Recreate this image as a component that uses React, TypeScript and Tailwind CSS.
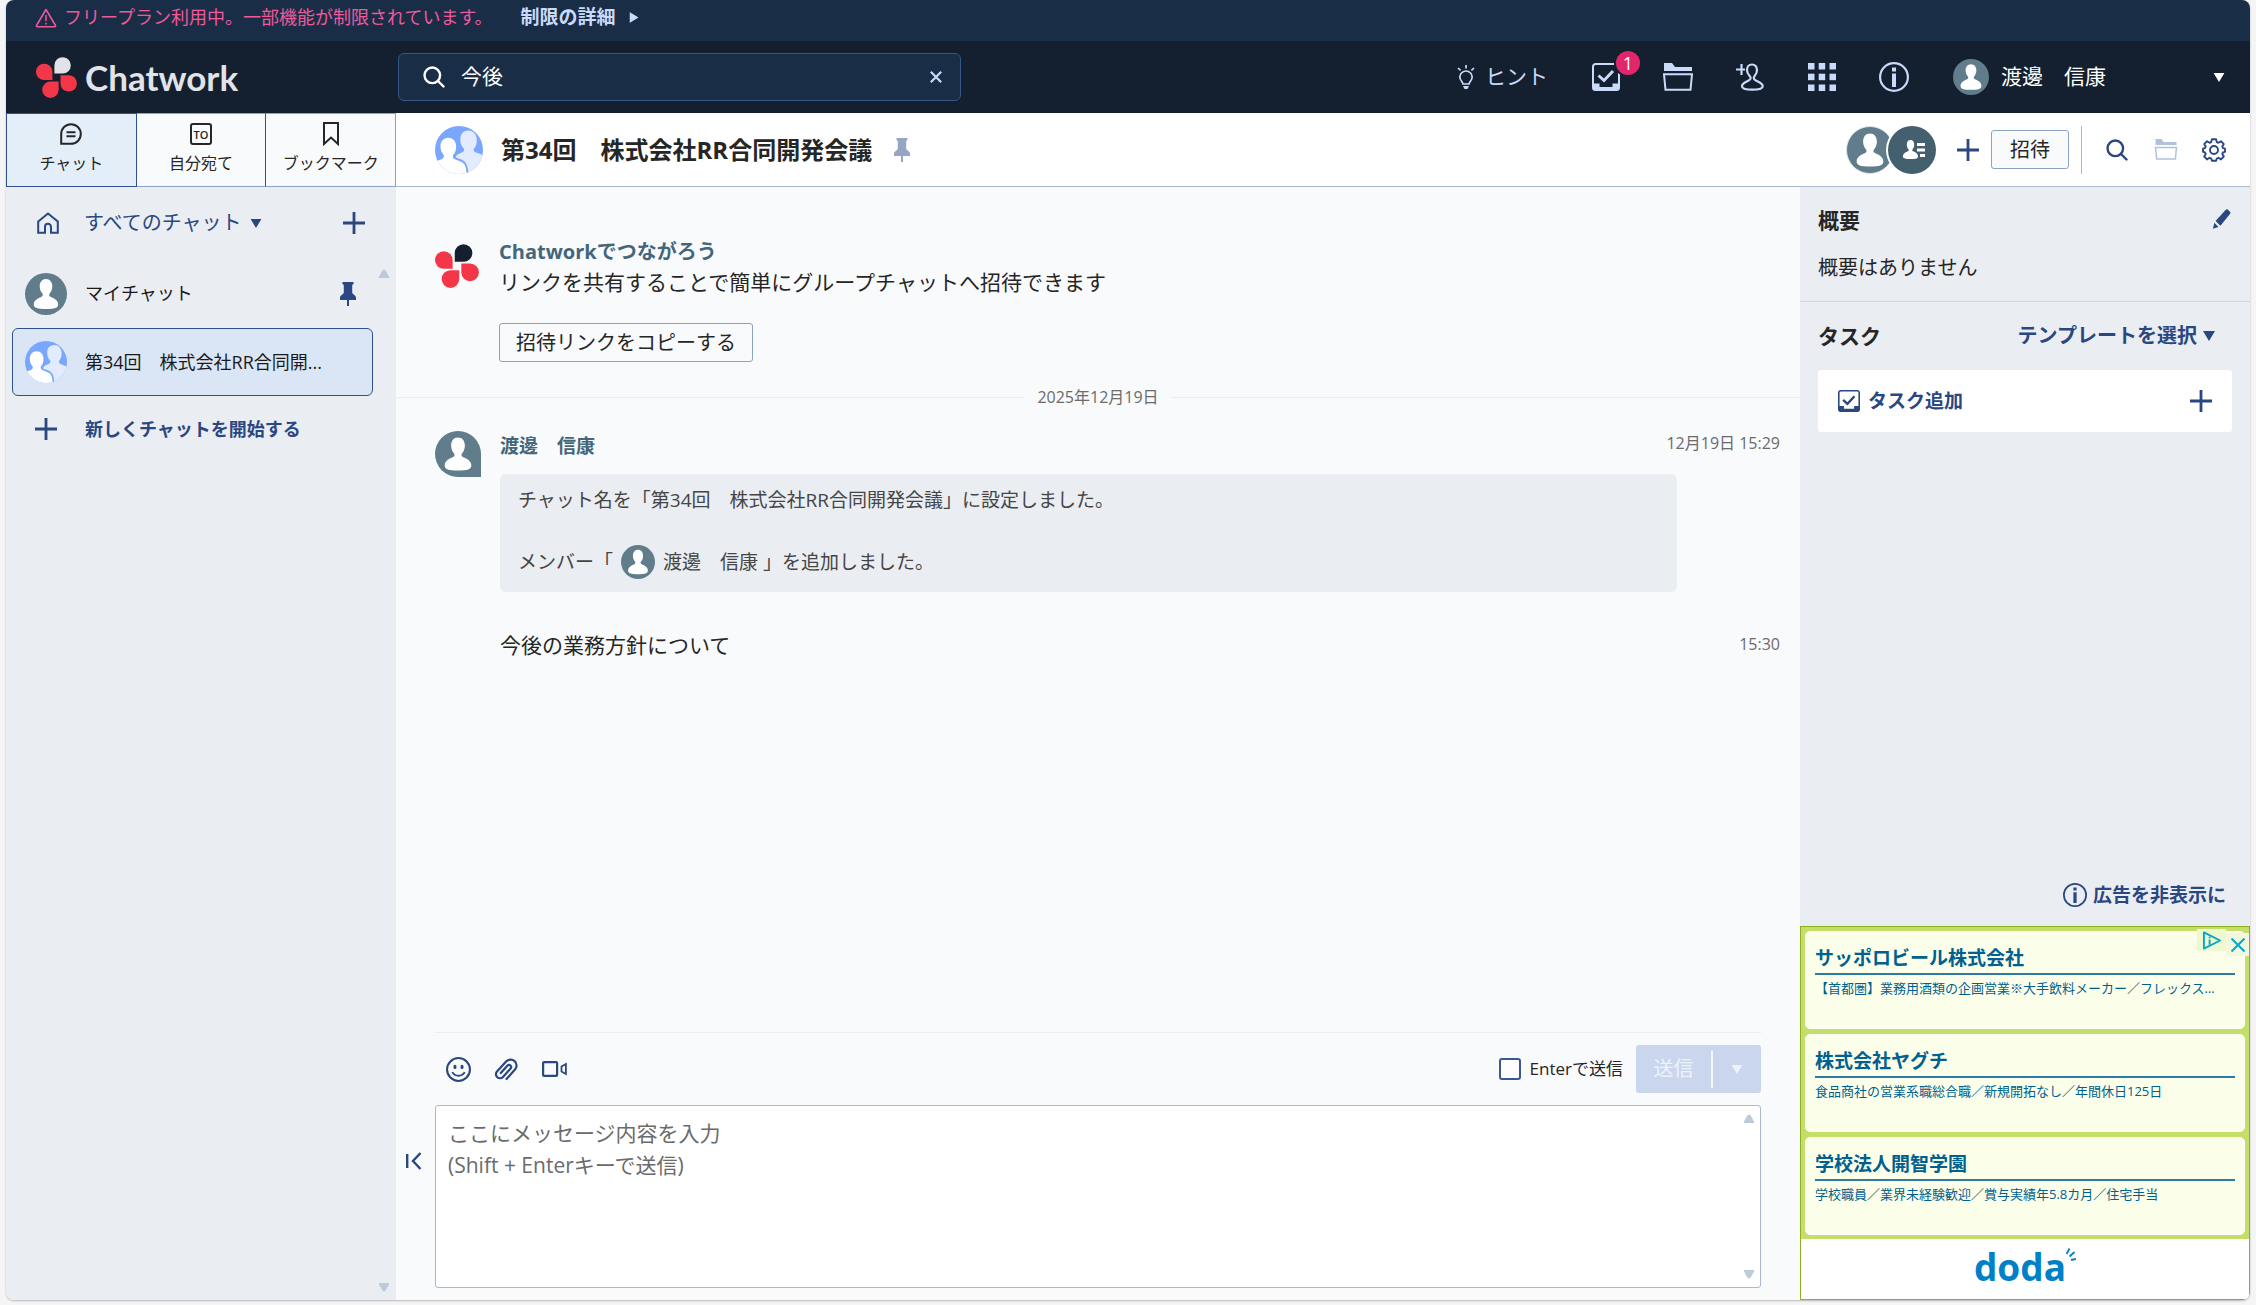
import React, { useState } from "react";
import clsx from "clsx";

interface IconProps {
  className?: string;
}

interface AdItem {
  id: number;
  company: string;
  text: string;
}

const ads: AdItem[] = [
  {
    id: 1,
    company: "サッポロビール株式会社",
    text: "【首都圏】業務用酒類の企画営業※大手飲料メーカー／フレックス…",
  },
  {
    id: 2,
    company: "株式会社ヤグチ",
    text: "食品商社の営業系職総合職／新規開拓なし／年間休日125日",
  },
  {
    id: 3,
    company: "学校法人開智学園",
    text: "学校職員／業界未経験歓迎／賞与実績年5.8カ月／住宅手当",
  },
];

// ---------- icons ----------

const LogoMark = ({ className, petal }: { className?: string; petal: string }) => (
  <svg viewBox="0 0 41 41" className={className} aria-hidden="true">
    <path d="M18.4 16.6V8.4a8.2 8.2 0 1 1 8.2 8.2z" fill={petal} />
    <path d="M16.4 23.1H8.2a8.2 8.2 0 1 1 8.2-8.2z" fill="#f33748" />
    <path d="M24.5 18.2h8.2a8.2 8.2 0 1 1-8.2 8.2z" fill="#f33748" />
    <path d="M22.6 24.5v8.2a8.2 8.2 0 1 1-8.2-8.2z" fill="#f33748" />
  </svg>
);

const UserAvatar = ({ className }: IconProps) => (
  <svg viewBox="0 0 42 42" className={clsx("shrink-0 bg-[#617c8a]", className)} aria-hidden="true">
    <path
      d="M21 6c-4 0-6.300 3.200-6.300 7.500 0 3 1.300 5.600 2.900 7.300.5 1.600.1 2.300-1.100 2.900-4 1.700-7.700 3.800-7.700 7.700 0 3.400 3.500 4.600 12.200 4.600s12.200-1.200 12.200-4.600c0-3.900-3.700-6-7.700-7.700-1.200-.6-1.600-1.300-1.100-2.900 1.600-1.700 2.900-4.300 2.900-7.300C27.300 9.200 25 6 21 6z"
      fill="#fff"
    />
  </svg>
);

const GroupAvatar = ({ className }: IconProps) => (
  <svg viewBox="0 0 42 42" className={clsx("shrink-0 rounded-full bg-[#79a7fd]", className)} aria-hidden="true">
    <path
      d="M29 4c-4.400 0-7 3.600-6.800 8.200.1 3.400 1.200 5.600 3.200 7.600.3 2-.6 3-3 3.800-2.600.9-4.400 2.400-4.400 4.400l5 2.200c3.600 1.400 5.600 4.400 6 11.800h13V25.600c-2-1-3.600-1.500-5-1.900-2.600-.8-3.400-1.700-3-3.700 1.700-1.900 2.600-4.400 2.600-7.600C36.500 7.400 33.600 4 29 4z"
      fill="#e2ebff"
    />
    <path d="M36 18.500l2 3.200-2 .2z" fill="#79a7fd" />
    <path
      d="M11.600 10.200c-4.300 0-6.800 3.300-6.800 7.800 0 3.300 1.200 5.700 2.900 7.400.4 2-.2 3-2 3.700L0 31.300V42h27.600c.1-5.700-1.200-9.200-5.400-10.900l-4.500-1.900c-1.800-.8-2.300-1.700-1.900-3.700 1.700-1.700 2.700-4.200 2.700-7.500 0-4.500-2.600-7.800-6.900-7.800z"
      fill="#fff"
    />
    <path d="M17.600 28l5.800 2.100c3.500 1.300 5 4.500 5.200 11.900" fill="none" stroke="#79a7fd" strokeWidth="1.200" />
  </svg>
);

const WarningIcon = ({ className }: IconProps) => (
  <svg viewBox="0 0 22 20" className={className} fill="none" stroke="currentColor" strokeWidth="1.500" aria-hidden="true">
    <path d="M11 1.500 20.500 17.500a.8.8 0 0 1-.7 1.200H2.200a.8.8 0 0 1-.7-1.200z" strokeLinejoin="round" />
    <path d="M11 7v6M11 14.800v1.700" />
  </svg>
);

const SearchIcon = ({ className }: IconProps) => (
  <svg viewBox="0 0 22 22" className={className} fill="none" stroke="currentColor" strokeWidth="2.400" aria-hidden="true">
    <circle cx="9.300" cy="9.300" r="7.800" />
    <path d="M15 15l5.500 5.500" strokeLinecap="round" />
  </svg>
);

const PlusIcon = ({ className }: IconProps) => (
  <svg viewBox="0 0 22 22" className={className} fill="none" stroke="currentColor" strokeWidth="2.800" aria-hidden="true">
    <path d="M11 0v22M0 11h22" />
  </svg>
);

const PinIcon = ({ className }: IconProps) => (
  <svg viewBox="0 0 16 24" className={className} fill="currentColor" aria-hidden="true">
    <path d="M2.500 0h11v2l-1.300 1v7.500c0 1.500 3.800 3 3.800 5V18H9v6H7v-6H0v-2.500c0-2 3.800-3.500 3.800-5V3L2.500 2z" />
  </svg>
);

const FolderIcon = ({ className }: IconProps) => (
  <svg viewBox="0 0 30 28" className={className} aria-hidden="true">
    <path d="M1 0h8l3 4h17v4H1z" fill="currentColor" />
    <path d="M1 11.300h28l-1.500 15.400h-25z" fill="none" stroke="currentColor" strokeWidth="2" />
  </svg>
);

const TaskIcon = ({ className }: IconProps) => (
  <svg viewBox="0 0 28 28" className={className} aria-hidden="true">
    <path
      d="M3.500 1h21A2.500 2.500 0 0 1 27 3.500v21a2.500 2.500 0 0 1-2.500 2.500h-21A2.500 2.500 0 0 1 1 24.500v-21A2.500 2.500 0 0 1 3.500 1z"
      fill="none"
      stroke="currentColor"
      strokeWidth="2"
    />
    <path d="M1 20.500h6.500V24h13v-3.500H27V26l-1 1H2l-1-1z" fill="currentColor" />
    <path d="M6.500 12.500l5.500 5 9-9.500" fill="none" stroke="currentColor" strokeWidth="3" />
  </svg>
);

const BulbIcon = ({ className }: IconProps) => (
  <svg viewBox="0 0 18 24" className={className} fill="none" stroke="currentColor" strokeWidth="1.700" aria-hidden="true">
    <path d="M9 0v3.500M1 3l2.600 2.400M17 3l-2.600 2.400" />
    <path d="M6 19c0-2-3.200-3.400-3.200-7A6.200 6.200 0 0 1 9 6a6.200 6.200 0 0 1 6.200 6c0 3.600-3.200 5-3.200 7z" />
    <path d="M6 21h6l-1.500 3h-3z" fill="currentColor" stroke="none" />
  </svg>
);

const AddContactIcon = ({ className }: IconProps) => (
  <svg viewBox="0 0 28 28" className={className} fill="none" stroke="currentColor" strokeWidth="2.200" aria-hidden="true">
    <path d="M5.500 1v11M0 6.500h9" />
    <path d="M16 1.500c-3 0-5 2.200-5 5.500 0 5.500 4 5.500 3.600 8.400C14 18.600 6 18.800 6 23.200c0 2.600 3 3.500 10.300 3.500S26.700 25.800 26.700 23.200c0-4.400-8.300-4.600-8.900-7.800C17.300 12.500 21 12.500 21 7c0-3.300-2-5.500-5-5.500z" />
  </svg>
);

const GridIcon = ({ className }: IconProps) => (
  <svg viewBox="0 0 28 28" className={className} fill="currentColor" aria-hidden="true">
    {[0, 10.700, 21.500].map((y) =>
      [0, 10.700, 21.500].map((x) => <rect key={`${x}-${y}`} x={x} y={y} width="6.500" height="6.500" />)
    )}
  </svg>
);

const InfoIcon = ({ className }: IconProps) => (
  <svg viewBox="0 0 30 30" className={className} aria-hidden="true">
    <circle cx="15" cy="15" r="13.900" fill="none" stroke="currentColor" strokeWidth="2.200" />
    <path d="M13 5.500h4v4h-4zM13 11.500h4V25h-4z" fill="currentColor" />
  </svg>
);

const Caret = ({ className }: IconProps) => (
  <svg viewBox="0 0 12 10" className={className} fill="currentColor" aria-hidden="true">
    <path d="M0 0h12L6 10z" />
  </svg>
);

const ScrollArrow = ({ className }: IconProps) => (
  <svg viewBox="0 0 12 10" className={clsx("h-[10px] w-3 text-[#bdcadb]", className)} aria-hidden="true">
    <path d="M5 1.200 1 8.500h10L7 1.200z" fill="currentColor" stroke="currentColor" strokeLinejoin="round" />
  </svg>
);

const ChatIcon = ({ className }: IconProps) => (
  <svg viewBox="0 0 22 22" className={className} fill="none" stroke="currentColor" strokeWidth="2" aria-hidden="true">
    <path d="M1.200 20.800V11A9.800 9.800 0 1 1 11 20.800z" />
    <path d="M6.500 9.200h9M6.500 13.200h9" />
  </svg>
);

const BookmarkIcon = ({ className }: IconProps) => (
  <svg viewBox="0 0 16 24" className={className} fill="none" stroke="currentColor" strokeWidth="2" aria-hidden="true">
    <path d="M1 1h14v21l-7-6.500L1 22z" />
  </svg>
);

const HomeIcon = ({ className }: IconProps) => (
  <svg viewBox="0 0 22 22" className={className} fill="none" stroke="currentColor" strokeWidth="2" aria-hidden="true">
    <path d="M1.200 9.500 11 1.500l9.800 8v11.300H14v-6a3 3 0 0 0-6 0v6H1.200z" />
  </svg>
);

const GearIcon = ({ className }: IconProps) => (
  <svg viewBox="0 0 24 24" className={className} fill="none" stroke="currentColor" strokeWidth="1.900" aria-hidden="true">
    <circle cx="12" cy="12" r="4" />
    <path
      d="M9.900 1.200h4.200l.7 2.900 1.600.7 2.600-1.600 2.800 2.900-1.500 2.500.7 1.600 2 .5v3.100l-2 .6-.7 1.600 1.500 2.500-2.800 2.900-2.600-1.600-1.600.7-.7 2.300H9.900l-.7-2.300-1.600-.7L5 21.400l-2.800-2.900L3.700 16 3 14.400l-2-.6v-3.100l2-.5.7-1.600-1.500-2.500L5 3.200l2.600 1.600 1.600-.7z"
      strokeLinejoin="round"
    />
  </svg>
);

const PencilIcon = ({ className }: IconProps) => (
  <svg viewBox="0 0 20 22" className={className} fill="currentColor" aria-hidden="true">
    <path d="M14.700.8a1.800 1.800 0 0 1 2.500 0L19.300 3a1.800 1.800 0 0 1 0 2.500L8.800 18.500 3.500 13.200zM2.200 15.200l4.500 4.600L.5 21.800z" />
  </svg>
);

const MembersIcon = ({ className }: IconProps) => (
  <svg viewBox="0 0 22 20" className={className} fill="currentColor" aria-hidden="true">
    <path d="M7.500 0C5 0 3.800 2 3.800 4.800c0 2 .8 3.600 1.800 4.700.3 1 0 1.500-.7 1.800C2.500 12.300 0 13.600 0 16.400 0 18.600 2.200 19 7.500 19s7.500-.4 7.500-2.600c0-2.800-2.500-4.100-4.900-5.100-.7-.3-1-.8-.7-1.800 1-1.100 1.800-2.700 1.800-4.700C11.200 2 10 0 7.500 0z" />
    <path d="M14 3h8v3h-8zM14 8.500h8v3h-8zM17 14h5v3h-5z" />
  </svg>
);

const SmileIcon = ({ className }: IconProps) => (
  <svg viewBox="0 0 24 24" className={className} fill="none" stroke="currentColor" strokeWidth="2" aria-hidden="true">
    <circle cx="12" cy="12" r="11" />
    <path d="M6 14.500c2.500 4.600 9.500 4.600 12 0" strokeWidth="1.800" />
    <ellipse cx="8.600" cy="9.500" rx="1.500" ry="2.100" fill="currentColor" stroke="none" />
    <ellipse cx="15.400" cy="9.500" rx="1.500" ry="2.100" fill="currentColor" stroke="none" />
  </svg>
);

const ClipIcon = ({ className }: IconProps) => (
  <svg viewBox="0 0 24 24" className={className} fill="none" stroke="currentColor" strokeWidth="2.200" strokeLinecap="round" aria-hidden="true">
    <path d="M12.500 22 21 12.600a6 6 0 0 0-.4-8.500 6 6 0 0 0-8.500.4L3 14.500a4 4 0 0 0 .3 5.700 4 4 0 0 0 5.700-.3l7.600-8.400a2.200 2.200 0 0 0-.1-3 2.200 2.200 0 0 0-3 .1l-6.700 7.500" />
  </svg>
);

const VideoIcon = ({ className }: IconProps) => (
  <svg viewBox="0 0 25 16" className={className} fill="none" stroke="currentColor" strokeWidth="2.200" aria-hidden="true">
    <rect x="1.100" y="1.100" width="14" height="13.800" rx="1" />
    <path d="M19.500 5.500 23.900 3v10l-4.400-2.500z" strokeWidth="1.800" />
  </svg>
);

const CollapseIcon = ({ className }: IconProps) => (
  <svg viewBox="0 0 16 18" className={className} fill="none" stroke="currentColor" strokeWidth="2.400" aria-hidden="true">
    <path d="M1.200 2v14M14.500 1 7 9l7.500 8" />
  </svg>
);

// ---------- header ----------

const Header = () => {
  const [keyword, setKeyword] = useState<string>("今後");

  return (
    <header>
      <div className="flex h-[41px] items-center bg-[#192e46] pb-[6px] pl-[29px] text-[18px]">
        <WarningIcon className="mr-[7px] h-5 w-[22px] text-[#f0599b]" />
        <span className="text-[#f0599b]">フリープラン利用中。一部機能が制限されています。</span>
        <a href="#limits" className="ml-7 flex items-center gap-3 text-[19px] font-bold text-[#c9dafa]">
          制限の詳細
          <Caret className="h-[9px] w-3 -rotate-90" />
        </a>
      </div>
      <div className="flex h-[72px] items-center bg-[#14202f] pr-[25px] pl-[30px] text-[21px]">
        <div className="flex w-[362px] items-center gap-2">
          <LogoMark className="h-[41px] w-[41px]" petal="#e1e3e8" />
          <span className="font-['Lato'] text-[35px] leading-none font-bold text-[#e1e3e8]">Chatwork</span>
        </div>
        <div className="flex h-12 w-[563px] items-center rounded-md border border-[#345785] bg-[#192e46] pr-[18px] pl-6">
          <SearchIcon className="h-[22px] w-[22px] text-white" />
          <input
            type="text"
            aria-label="検索"
            value={keyword}
            onChange={(e) => setKeyword(e.target.value)}
            className="ml-4 min-w-0 flex-1 bg-transparent text-white outline-none"
          />
          <button type="button" aria-label="クリア" onClick={() => setKeyword("")} className="text-[#c9dafa]">
            <svg viewBox="0 0 12 12" className="h-3 w-3" stroke="currentColor" strokeWidth="2.200">
              <path d="M.8.8l10.400 10.400M11.200.8.8 11.200" />
            </svg>
          </button>
        </div>
        <div className="ml-auto flex items-center text-[#c9dafa]">
          <button type="button" className="flex items-center gap-[10px]">
            <BulbIcon className="h-6 w-[18px]" />
            ヒント
          </button>
          <button type="button" aria-label="タスク管理" className="relative ml-[44px]">
            <TaskIcon className="h-7 w-7" />
            <span className="absolute -top-3 -right-5 flex h-6 w-6 items-center justify-center rounded-full bg-[#e2266b] text-[18px] leading-none text-white ring-2 ring-[#14202f]">
              1
            </span>
          </button>
          <button type="button" aria-label="ファイル管理" className="ml-[43px]">
            <FolderIcon className="h-7 w-[30px]" />
          </button>
          <button type="button" aria-label="コンタクト管理" className="ml-[43px]">
            <AddContactIcon className="h-7 w-7" />
          </button>
          <button type="button" aria-label="サービス" className="ml-[44px]">
            <GridIcon className="h-7 w-7" />
          </button>
          <button type="button" aria-label="ヘルプ" className="ml-[43px]">
            <InfoIcon className="h-[30px] w-[30px]" />
          </button>
          <button type="button" className="ml-[44px] flex w-[272px] items-center gap-3 text-left text-white">
            <UserAvatar className="h-9 w-9 rounded-full" />
            <span className="flex-1 whitespace-nowrap">渡邊　信康</span>
            <Caret className="h-[9px] w-3" />
          </button>
        </div>
      </div>
    </header>
  );
};

// ---------- sidebar ----------

const tabClass = "flex flex-1 flex-col items-center gap-[6px] border pt-2 text-[16px] leading-6 text-[#262626]";

const Sidebar = () => {
  const [tab, setTab] = useState<number>(0);

  return (
    <aside className="flex w-[390px] shrink-0 flex-col bg-[#eaedf2] text-[#2a4782]">
      <div className="flex h-[74px]">
        <button
          type="button"
          onClick={() => setTab(0)}
          className={clsx(tabClass, "border-[#2f5190]", tab === 0 ? "bg-[#e4eef9]" : "bg-[#f9fafc]")}
        >
          <ChatIcon className="mt-px h-[22px] w-[22px]" />
          チャット
        </button>
        <button
          type="button"
          onClick={() => setTab(1)}
          className={clsx(tabClass, "border-x-0 border-[#8ba3c4]", tab === 1 ? "bg-[#e4eef9]" : "bg-[#f9fafc]")}
        >
          <span className="mt-px flex h-[22px] w-[22px] items-center justify-center rounded-[3px] border-2 border-[#262626] text-[11px] leading-none font-semibold">
            TO
          </span>
          自分宛て
        </button>
        <button
          type="button"
          onClick={() => setTab(2)}
          className={clsx(
            tabClass,
            "border-[#8ba3c4] border-l-[#2f5190]",
            tab === 2 ? "bg-[#e4eef9]" : "bg-[#f9fafc]"
          )}
        >
          <BookmarkIcon className="-mb-px h-6 w-4" />
          ブックマーク
        </button>
      </div>
      <div className="flex h-[72px] items-center px-[31px]">
        <HomeIcon className="h-[22px] w-[22px]" />
        <button type="button" aria-haspopup="menu" className="ml-[25px] flex items-center gap-2 text-[20px]">
          すべてのチャット
          <Caret className="h-[9px] w-3" />
        </button>
        <button type="button" aria-label="チャットを追加" className="ml-auto">
          <PlusIcon className="h-[22px] w-[22px]" />
        </button>
      </div>
      <div className="flex min-h-0 flex-1">
        <ul className="ml-[6px] w-[361px] text-[18px] text-[#1a1a1a]">
          <li>
            <button type="button" className="flex h-[69px] w-full items-center px-[13px] text-left">
              <UserAvatar className="h-[42px] w-[42px] rounded-full" />
              <span className="ml-[18px] flex-1">マイチャット</span>
              <PinIcon className="mr-1 h-6 w-4 text-[#2a4782]" />
            </button>
          </li>
          <li>
            <button
              type="button"
              className="flex h-[68px] w-full items-center rounded-md border border-[#2f5190] bg-[#dae6f5] px-3 text-left"
            >
              <GroupAvatar className="h-[42px] w-[42px]" />
              <span className="ml-[18px] whitespace-nowrap">第34回　株式会社RR合同開...</span>
            </button>
          </li>
          <li>
            <button type="button" className="flex h-[66px] w-full items-center px-[23px] text-left font-bold text-[#2a4782]">
              <PlusIcon className="h-[22px] w-[22px]" />
              <span className="ml-7">新しくチャットを開始する</span>
            </button>
          </li>
        </ul>
        <div className="ml-[5px] flex flex-col justify-between pt-[10px] pb-2">
          <ScrollArrow />
          <ScrollArrow className="rotate-180" />
        </div>
      </div>
    </aside>
  );
};

// ---------- room ----------

const RoomHeader = () => (
  <div className="flex h-[74px] items-center border-b border-[#a9b9ce] bg-white pr-6 pl-[39px]">
    <GroupAvatar className="h-12 w-12" />
    <h1 className="ml-[18px] text-[24px] font-bold text-[#262626]">第34回　株式会社RR合同開発会議</h1>
    <PinIcon className="ml-[22px] h-6 w-4 text-[#95a5c3]" />
    <div className="ml-auto flex items-center text-[#2a4782]">
      <UserAvatar className="h-12 w-12 rounded-full border border-[#dde2e8]" />
      <button
        type="button"
        aria-label="メンバー"
        className="z-10 -ml-[6px] flex h-12 w-12 items-center justify-center rounded-full bg-[#44606f] pl-1 text-white ring-2 ring-white"
      >
        <MembersIcon className="h-5 w-[22px]" />
      </button>
      <button type="button" aria-label="メンバーを追加" className="ml-[21px]">
        <PlusIcon className="h-[22px] w-[22px]" />
      </button>
      <button
        type="button"
        className="ml-3 h-[39px] w-[78px] rounded-[3px] border border-[#8ba3c4] bg-[#f9fafc] text-[20px] leading-none text-[#262626]"
      >
        招待
      </button>
      <span className="ml-3 h-12 w-px bg-[#a9b9ce]" />
      <button type="button" aria-label="チャット内検索" className="ml-6">
        <SearchIcon className="h-[22px] w-[22px]" />
      </button>
      <button type="button" aria-label="ファイル" className="ml-[26px] text-[#b0c2d9]">
        <FolderIcon className="h-[21px] w-6" />
      </button>
      <button type="button" aria-label="設定" className="ml-6">
        <GearIcon className="h-6 w-6" />
      </button>
    </div>
  </div>
);

const Messages = () => (
  <div className="min-h-0 flex-1">
    <div className="flex pt-[49px] pl-[39px]">
      <LogoMark className="mt-2 h-11 w-11" petal="#14202f" />
      <div className="ml-5 text-[21px] leading-[31px] text-[#262626]">
        <p className="text-[20px] font-bold text-[#44667a]">Chatworkでつながろう</p>
        <p>リンクを共有することで簡単にグループチャットへ招待できます</p>
        <button
          type="button"
          className="mt-[25px] h-[39px] rounded-[3px] border border-[#8ba3c4] px-4 text-[20px] leading-none"
        >
          招待リンクをコピーする
        </button>
      </div>
    </div>
    <div className="mt-[23px] flex items-center gap-3 text-[16px] leading-6 text-[#6b6b6b]">
      <span className="h-px flex-1 bg-[#e9edf2]" />
      2025年12月19日
      <span className="h-px flex-1 bg-[#e9edf2]" />
    </div>
    <div className="flex pt-[22px] pr-5 pl-[39px]">
      <UserAvatar className="h-[46px] w-[46px] rounded-full rounded-br-none" />
      <div className="ml-[19px] min-w-0 flex-1 text-[19px] text-[#454545]">
        <div className="flex items-start justify-between">
          <p className="leading-[31px] font-bold text-[#44667a]">渡邊　信康</p>
          <time className="text-[16px] leading-6 text-[#6b6b6b]">12月19日 15:29</time>
        </div>
        <div className="mt-3 mr-[103px] flex h-[118px] flex-col gap-[30px] rounded-md bg-[#eaedf2] px-[18px] pt-[11px]">
          <p className="leading-[30px]">チャット名を「第34回　株式会社RR合同開発会議」に設定しました。</p>
          <p className="flex items-center leading-[34px]">
            メンバー「
            <UserAvatar className="mx-2 h-[34px] w-[34px] rounded-full" />
            渡邊　信康 」を追加しました。
          </p>
        </div>
      </div>
    </div>
    <div className="mt-[38px] flex items-start justify-between pr-5 pl-[104px]">
      <p className="text-[21px] leading-[31px] text-[#262626]">今後の業務方針について</p>
      <time className="text-[16px] leading-7 text-[#6b6b6b]">15:30</time>
    </div>
  </div>
);

const Composer = () => {
  const [message, setMessage] = useState<string>("");
  const [sendByEnter, setSendByEnter] = useState<boolean>(false);

  return (
    <div className="flex pr-[39px] pb-3 text-[#2a4782]">
      <button type="button" aria-label="サイドバーを閉じる" className="flex w-[39px] items-end pb-[118px] pl-[10px]">
        <CollapseIcon className="h-[18px] w-4" />
      </button>
      <div className="min-w-0 flex-1 border-t border-[#e9edf2] pt-3">
        <div className="flex h-12 items-center">
          <button type="button" aria-label="絵文字" className="ml-[11px]">
            <SmileIcon className="h-[25px] w-[25px]" />
          </button>
          <button type="button" aria-label="ファイルを添付" className="ml-[23px]">
            <ClipIcon className="h-6 w-6" />
          </button>
          <button type="button" aria-label="ビデオ通話" className="ml-6">
            <VideoIcon className="h-4 w-[25px]" />
          </button>
          <label className="mr-[13px] ml-auto flex items-center gap-[9px] text-[17px] text-[#262626]">
            <input
              type="checkbox"
              checked={sendByEnter}
              onChange={(e) => setSendByEnter(e.target.checked)}
              className="h-[22px] w-[22px] appearance-none rounded-[3px] border-2 border-[#3a5892] bg-white checked:bg-[#3a5892]"
            />
            Enterで送信
          </label>
          <div className="flex h-12 w-[125px] items-center rounded-[3px] bg-[#cad6ee] text-[#eef3fb]">
            <button type="button" disabled className="flex-1 text-[20px]">
              送信
            </button>
            <span className="h-[37px] w-[2px] bg-[#f4f7fc]" />
            <button type="button" disabled aria-label="送信オプション" className="flex w-12 justify-center">
              <Caret className="h-[9px] w-3" />
            </button>
          </div>
        </div>
        <div className="relative mt-3">
          <textarea
            aria-label="メッセージ"
            value={message}
            onChange={(e) => setMessage(e.target.value)}
            placeholder={"ここにメッセージ内容を入力\n(Shift + Enterキーで送信)"}
            className="block h-[183px] w-full resize-none rounded-[3px] border border-[#a9b9ce] bg-white px-3 py-[11px] text-[21px] leading-8 text-[#262626] outline-none placeholder:text-[#6b6b6b]"
          />
          <ScrollArrow className="absolute top-[9px] right-[6px]" />
          <ScrollArrow className="absolute right-[6px] bottom-[9px] rotate-180" />
        </div>
      </div>
    </div>
  );
};

// ---------- right column ----------

const DodaAd = () => (
  <div className="relative border border-[#8db01e] bg-[#c4df67]">
    <ul className="flex flex-col gap-[5px] px-1 py-1 text-[#00608f]">
      {ads.map((ad) => (
        <li key={ad.id} className="h-[98px] rounded-[5px] border border-white bg-[#fbffea] px-[9px] pt-[11px]">
          <a href="#ad">
            <p className="border-b-2 border-[#2d7ba5] text-[19px] leading-[30px] font-bold">{ad.company}</p>
            <p className="mt-1 overflow-hidden text-[13px] leading-[18px] whitespace-nowrap">{ad.text}</p>
          </a>
        </li>
      ))}
    </ul>
    <div className="flex h-[60px] justify-center bg-white pt-[5px] text-[#0080c6]">
      <span className="font-['Open_Sans'] text-[37px] leading-[46px] font-bold">doda</span>
      <svg viewBox="0 0 10 14" className="mt-1 h-[14px] w-[10px]" stroke="currentColor" strokeWidth="1.800" fill="none">
        <path d="M.5 6 3.500.5M3.500 8.500 8.500 4M5 12l5-1" />
      </svg>
    </div>
    <div className="absolute top-[2px] right-0 flex items-start text-[#00a8cc]">
      <span className="flex h-[22px] w-[29px] items-center justify-center bg-[#f0f8cf]">
        <svg viewBox="0 0 20 20" className="h-[19px] w-5" fill="none" stroke="currentColor" strokeWidth="2" strokeLinejoin="round">
          <path d="M1.500 1.500v17L18.500 10z" />
          <path d="M7.500 6v1.600M7.500 9v5.500" />
        </svg>
      </span>
      <button type="button" aria-label="広告を閉じる" className="mt-1 flex h-[23px] w-[23px] items-center justify-center bg-[#f3f8dc]">
        <svg viewBox="0 0 14 14" className="h-[14px] w-[14px]" stroke="currentColor" strokeWidth="2">
          <path d="M.5.5l13 13M13.500.5l-13 13" />
        </svg>
      </button>
    </div>
  </div>
);

const RightPanel = () => (
  <aside className="flex w-[450px] shrink-0 flex-col bg-[#eaedf2] text-[19px] text-[#2a4782]">
    <section className="h-[115px] border-b border-[#ccd6e6] px-[18px] pt-[17px]">
      <div className="flex items-start justify-between">
        <h2 className="text-[21px] leading-8 font-bold text-[#262626]">概要</h2>
        <button type="button" aria-label="概要を編集" className="mt-[5px] mr-px">
          <PencilIcon className="h-5 w-[19px]" />
        </button>
      </div>
      <p className="mt-4 text-[20px] leading-8 text-[#262626]">概要はありません</p>
    </section>
    <section className="px-[18px] pt-[18px]">
      <div className="flex items-center justify-between">
        <h2 className="text-[21px] leading-8 font-bold text-[#262626]">タスク</h2>
        <button type="button" aria-haspopup="menu" className="mr-[17px] flex items-center gap-[6px] text-[20px] leading-8 font-bold">
          テンプレートを選択
          <Caret className="h-[10px] w-3" />
        </button>
      </div>
      <button type="button" className="mt-[18px] flex h-[62px] w-full items-center rounded-[3px] bg-white px-5 font-bold">
        <TaskIcon className="h-[22px] w-[22px]" />
        <span className="ml-2">タスク追加</span>
        <PlusIcon className="ml-auto h-[22px] w-[22px]" />
      </button>
    </section>
    <a href="#hide-ads" className="mt-auto mr-6 mb-4 flex items-center justify-end gap-[6px] leading-[30px] font-bold">
      <InfoIcon className="h-6 w-6" />
      広告を非表示に
    </a>
    <DodaAd />
  </aside>
);

const App: React.FC = () => {
  return (
    <div className="h-screen bg-[#f5f5f5] px-[6px] pb-[5px] font-['Open_Sans','Noto_Sans_CJK_JP',sans-serif]">
      <div className="flex h-full flex-col overflow-hidden rounded-lg bg-[#f9fafc] shadow-[0_1px_2px_rgba(0,0,0,0.25)]">
        <Header />
        <div className="flex min-h-0 flex-1">
          <Sidebar />
          <div className="flex min-w-0 flex-1 flex-col">
            <RoomHeader />
            <div className="flex min-h-0 flex-1">
              <main className="flex min-w-0 flex-1 flex-col bg-[#f9fafc]">
                <Messages />
                <Composer />
              </main>
              <RightPanel />
            </div>
          </div>
        </div>
      </div>
    </div>
  );
};

export default App;
